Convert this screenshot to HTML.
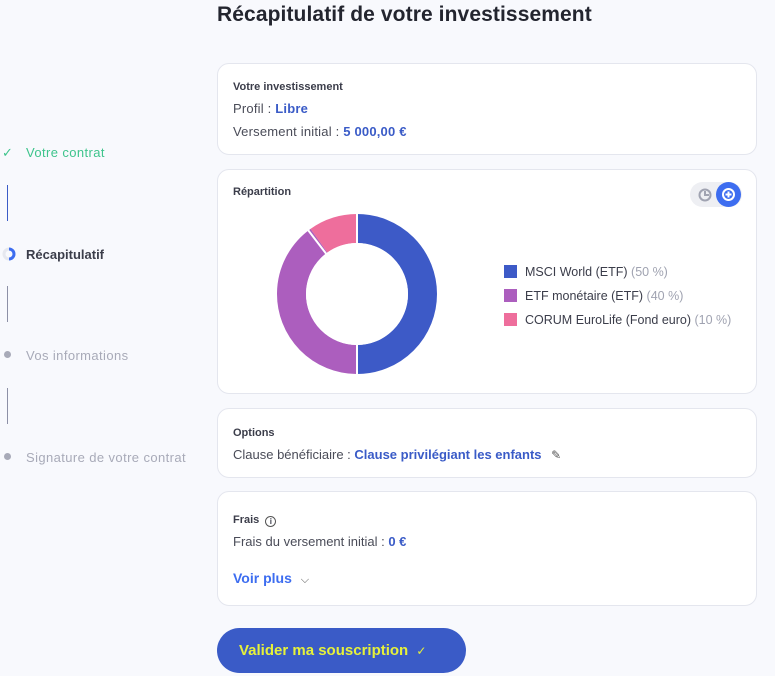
<!DOCTYPE html>
<html><head><meta charset="utf-8"><style>
*{margin:0;padding:0;box-sizing:border-box}
body{width:775px;height:676px;overflow:hidden;background:#f8f9fd;font-family:"Liberation Sans",sans-serif;color:#3b3d4a;position:relative}
.a{position:absolute}
h1{position:absolute;left:217px;top:3px;font-size:21px;font-weight:bold;color:#23252f;letter-spacing:0.1px}
.card{position:absolute;left:217px;width:540px;background:#fff;border:1px solid #e4e6ee;border-radius:12px}
.t{position:absolute;left:15px;font-size:11px;font-weight:bold;color:#3b3d4a}
.l{position:absolute;left:15px;font-size:13px;color:#4a4c58;letter-spacing:0.2px}
.b{color:#3a5bc7;font-weight:bold}
.nav{position:absolute;left:26px;font-size:13px;letter-spacing:0.4px}
.vl{position:absolute;left:7px;width:1px;height:36px;background:#8d90a6}
.leg{position:absolute;left:286px;font-size:12.5px;color:#3b3d4a}
.leg i{display:inline-block;width:13px;height:13px;vertical-align:-2px;margin-right:8px}
.leg span{color:#a0a3b1}
</style></head><body>
<h1>Récapitulatif de votre investissement</h1>

<div class="a" style="left:2px;top:145px;color:#3ec48c;font-size:13px">✓</div>
<div class="nav" style="top:145px;color:#3ec48c">Votre contrat</div>
<div class="vl" style="top:185px;background:#3a5bc7"></div>
<svg class="a" style="left:2px;top:247px" width="14" height="14"><circle cx="7" cy="7" r="5" fill="none" stroke="#e6e8ef" stroke-width="3"/><path d="M7 2 A5 5 0 0 1 7 12" fill="none" stroke="#3d6df0" stroke-width="3"/></svg>
<div class="nav" style="top:247px;color:#3b3d4a;font-weight:bold;letter-spacing:0">Récapitulatif</div>
<div class="vl" style="top:286px"></div>
<div class="a" style="left:4px;top:351px;width:7px;height:7px;border-radius:50%;background:#a8aab8"></div>
<div class="nav" style="top:348px;color:#a8aab8">Vos informations</div>
<div class="vl" style="top:388px"></div>
<div class="a" style="left:4px;top:453px;width:7px;height:7px;border-radius:50%;background:#a8aab8"></div>
<div class="nav" style="top:450px;color:#a8aab8">Signature de votre contrat</div>

<div class="card" style="top:63px;height:92px">
<div class="t" style="top:17px">Votre investissement</div>
<div class="l" style="top:37px">Profil : <span class="b">Libre</span></div>
<div class="l" style="top:60px">Versement initial : <span class="b">5 000,00 €</span></div>
</div>

<div class="card" style="top:169px;height:225px">
<div class="t" style="top:16px">Répartition</div>
<div class="a" style="left:472px;top:12px;width:52px;height:25px;border-radius:13px;background:#eeeff3"></div>
<svg class="a" style="left:480px;top:18px" width="14" height="14"><circle cx="7" cy="7" r="5.5" fill="none" stroke="#a0a3b1" stroke-width="2"/><path d="M7 3v4h4" fill="none" stroke="#a0a3b1" stroke-width="2"/></svg>
<div class="a" style="left:498px;top:12px;width:25px;height:25px;border-radius:50%;background:#3d6df0"></div>
<svg class="a" style="left:503px;top:17px" width="15" height="15"><circle cx="7.5" cy="7.5" r="5.5" fill="none" stroke="#fff" stroke-width="2"/><path d="M7.5 4.5v6M4.5 7.5h6" stroke="#fff" stroke-width="2"/></svg>
<svg class="a" style="left:57px;top:42px" width="164" height="164" viewBox="0 0 164 164">
<g transform="rotate(-90 82 82)" fill="none" stroke-width="29">
<circle cx="82" cy="82" r="65.5" stroke="#3d5ac7" stroke-dasharray="205.8 1000"/>
<circle cx="82" cy="82" r="65.5" stroke="#ac5ebe" stroke-dasharray="164.6 1000" transform="rotate(180.5 82 82)"/>
<circle cx="82" cy="82" r="65.5" stroke="#ee6e9c" stroke-dasharray="40.5 1000" transform="rotate(324.5 82 82)"/>
</g>
<g stroke="#fff" stroke-width="2"><path d="M82 0v32M82 132v32"/><path d="M82 82 L33 18" /></g>
<circle cx="82" cy="82" r="51" fill="#fff"/>
</svg>
<div class="leg" style="top:95px"><i style="background:#3d5ac7"></i>MSCI World (ETF) <span>(50 %)</span></div>
<div class="leg" style="top:119px"><i style="background:#ac5ebe"></i>ETF monétaire (ETF) <span>(40 %)</span></div>
<div class="leg" style="top:143px"><i style="background:#ee6e9c"></i>CORUM EuroLife (Fond euro) <span>(10 %)</span></div>
</div>

<div class="card" style="top:408px;height:70px">
<div class="t" style="top:18px">Options</div>
<div class="l" style="top:38px;letter-spacing:0">Clause bénéficiaire : <span class="b">Clause privilégiant les enfants</span> <span style="color:#555;font-size:12px;margin-left:6px">✎</span></div>
</div>

<div class="card" style="top:491px;height:115px">
<div class="t" style="top:22px">Frais <span style="display:inline-block;width:11px;height:11px;border:1px solid #555;border-radius:50%;font-size:8px;text-align:center;line-height:9px;margin-left:3px;vertical-align:-1px">i</span></div>
<div class="l" style="top:42px;letter-spacing:0">Frais du versement initial : <span class="b">0 €</span></div>
<div class="a" style="left:15px;top:78px;font-size:14px;font-weight:bold;color:#3d6df0">Voir plus <span style="color:#555;font-weight:normal;font-size:11px;margin-left:5px">⌵</span></div>
</div>

<div class="a" style="left:217px;top:628px;width:249px;height:45px;border-radius:23px;background:#3a5bc7;color:#e6f13a;font-size:15px;font-weight:bold;padding:14px 0 0 22px">Valider ma souscription <span style="font-weight:normal;font-size:12px;margin-left:4px">✓</span></div>
</body></html>
